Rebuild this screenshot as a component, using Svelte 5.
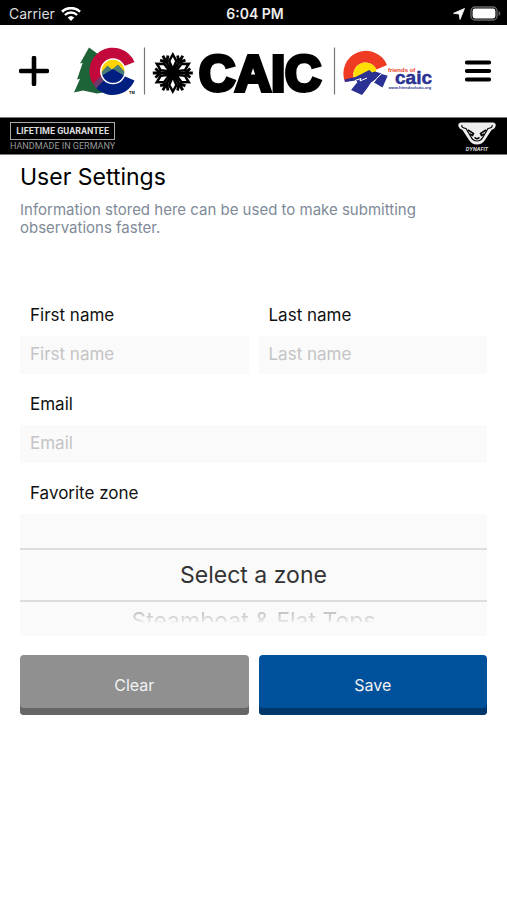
<script>
  const zones = ['Select a zone', 'Steamboat & Flat Tops', 'Front Range', 'Vail & Summit County'];
  let firstName = $state('');
  let lastName = $state('');
  let email = $state('');
  let zone = $state(zones[0]);
  let next = $derived(zones[zones.indexOf(zone) + 1] ?? '');
  let previous = $derived(zones[zones.indexOf(zone) - 1] ?? '');
  const arms = [0, 60, 120, 180, 240, 300];

  function clear() {
    firstName = '';
    lastName = '';
    email = '';
    zone = zones[0];
  }
</script>

<div class="status">
  <div class="carrier">
    <span>Carrier</span>
    <svg width="20" height="14" viewBox="0 0 20 14" fill="#fff" aria-hidden="true">
      <path d="M10 14 6.700 10.600a4.800 4.800 0 0 1 6.600 0z" />
      <path d="M3.900 8a8.800 8.800 0 0 1 12.200 0" fill="none" stroke="#fff" stroke-width="2.400" />
      <path d="M1 4.700a13 13 0 0 1 18 0" fill="none" stroke="#fff" stroke-width="2.600" />
    </svg>
  </div>
  <strong>6:04 PM</strong>
  <div class="power">
    <svg width="12" height="12" viewBox="0 0 12 12" fill="#fff" aria-hidden="true">
      <path d="M11.500.5 7 11.500 6.200 6 .5 5.300z" stroke="#fff" stroke-width=".8" stroke-linejoin="round" />
    </svg>
    <svg width="31" height="15" viewBox="0 0 31 15" aria-hidden="true">
      <rect x="1" y="1" width="26" height="13" rx="4" fill="none" stroke="#666" stroke-width="1.400" />
      <rect x="2.600" y="2.600" width="22.800" height="9.800" rx="2.400" fill="#fff" />
      <path d="M28.600 5v5q1.800-.8 1.800-2.500T28.600 5z" fill="#666" />
    </svg>
  </div>
</div>

<header>
  <button class="icon" aria-label="Add observation">
    <svg width="30" height="30" viewBox="0 0 30 30"><path d="M15 2v26M2 15h26" stroke="#000" stroke-width="4.600" stroke-linecap="round" /></svg>
  </button>
  <svg class="logo" width="362" height="50" viewBox="73 46 362 50" role="img" aria-label="CAIC and Friends of CAIC">
    <path d="M89 47.500 80 63.500l2.700-.8L77 79.500l3-.8-6 13.800 9-2 14 3 12-2V62z" fill="#1f6338" />
    <path d="M134.500 62A23.500 23.500 0 1 0 95.500 87L105 78A11 11 0 0 1 124.500 66z" fill="#c3093b" />
    <path d="M134.500 80.500A23.500 23.500 0 0 1 96 88L113 71l11 5z" fill="#001f80" />
    <path d="M93.500 83.500l8-8 4 3-9.500 10z" fill="#6b3a6a" />
    <circle cx="113" cy="71.300" r="12" fill="#ffd400" />
    <path d="M101.500 72l6-6.500 4.500 4 6-5 7 7.500-1 6h-21z" fill="#497b78" />
    <path d="M102 75.500l11-6.500 11.500 7A12 12 0 0 1 102 75.500z" fill="#001f80" />
    <circle cx="113" cy="71.300" r="12.200" fill="none" stroke="#fff" stroke-width="1.500" />
    <text x="129" y="94" font-size="4" font-weight="700">TM</text>
    <path d="M144.500 47.500v47M334.500 47.500v47" stroke="#777" stroke-width="1.200" />
    <g transform="translate(172.800 73)" stroke="#000">
      {#each arms as angle}
        <path d="M0 0H20M12 0l5.500-4.500M12 0l5.500 4.500" fill="none" stroke-width="2.800" transform="rotate({angle})" />
      {/each}
      {#each arms as angle}
        <path d="M3.500 0L12-3.600 18.500 0 12 3.600z" fill="#fff" stroke-width="2.500" transform="rotate({angle + 30})" />
      {/each}
    </g>
    <text class="caic" x="199" y="91">CAIC</text>
    <path d="M345 82A20.500 20.500 0 1 1 387 65l-10.500 4.500A12 12 0 0 0 354.500 80z" fill="#ef3b23" />
    <path d="M354.500 80A12 12 0 0 1 376.500 69.500L375 75l-6-3z" fill="#ffdf00" />
    <path d="M345 82l-.5-2.500 11-2.500 6-3 7.800-4 2.700 2.500 3-1 6.500 2-4.500 5-6 4-4 6-5 6.500-11-5 6.500-8-2-1.500z" fill="#2b3192" />
    <path d="M377 78.500l4.500-4.500 6.200 1.700-5.200 11.800-8.500-5z" fill="#2b3192" />
    <path d="M355 80.500l6-2-1 2.500 7-3M381.500 73.500l-5 5-3 4" fill="none" stroke="#fff" stroke-width="1" />
    <text class="friends" x="388" y="72">friends of</text>
    <text class="small-caic" x="395" y="83.500">caic</text>
    <text class="site" x="388.500" y="88.500">www.friendsofcaic.org</text>
  </svg>
  <button class="icon menu" aria-label="Menu">
    <svg width="26" height="22" viewBox="0 0 26 22"><path d="M2 2.500h22M2 11h22M2 19.500h22" stroke="#000" stroke-width="4.200" stroke-linecap="round" /></svg>
  </button>
</header>

<a class="banner" href="#sponsor">
  <span class="guarantee">
    <span class="boxed">LIFETIME GUARANTEE</span>
    <span class="made">HANDMADE IN GERMANY</span>
  </span>
  <svg width="40" height="32" viewBox="0 0 40 32" role="img" aria-label="Dynafit">
    <path d="M4 2.500h32q3.500.5 2.500 4-.5 2-4 3.500L28 20q-3 4.500-8 4.500T12 20L5.500 10q-3.500-1.500-4-3.500-1-3.500 2.500-4z" fill="#eee" />
    <path d="M5 5q-1 3 4 3.500l5 8.500q2 4 6 4t6-4l5-8.500q5-.5 4-3.500" fill="none" stroke="#000" stroke-width="1.200" />
    <path d="M11 10l5.500 3.500-1 2-3-1.500M29 10l-5.500 3.500 1 2 3-1.500M17.500 17.500l2.500 1.300 2.500-1.300" fill="none" stroke="#000" stroke-width="1.500" />
    <text x="20" y="31" text-anchor="middle" font-size="5" font-weight="700" font-style="italic" fill="#ddd">DYNAFIT</text>
  </svg>
</a>

<main>
  <h1>User Settings</h1>
  <p>Information stored here can be used to make submitting observations faster.</p>
  <form onsubmit={(e) => e.preventDefault()}>
    <div class="pair">
      <div class="field">
        <label for="first">First name</label>
        <input id="first" placeholder="First name" bind:value={firstName} />
      </div>
      <div class="field">
        <label for="last">Last name</label>
        <input id="last" placeholder="Last name" bind:value={lastName} />
      </div>
    </div>
    <div class="field">
      <label for="email">Email</label>
      <input id="email" type="email" placeholder="Email" bind:value={email} />
    </div>
    <div class="field">
      <label for="zone">Favorite zone</label>
      <div class="wheel">
        <div class="ghost" aria-hidden="true">{previous}</div>
        <select id="zone" bind:value={zone}>
          {#each zones as name}
            <option value={name}>{name}</option>
          {/each}
        </select>
        <div class="ghost" aria-hidden="true">{next}</div>
      </div>
    </div>
    <div class="pair actions">
      <button type="button" class="action" onclick={clear}>Clear</button>
      <button type="submit" class="action save">Save</button>
    </div>
  </form>
</main>

<style>
  :global(body) {
    background: #fff;
    color: #111;
    font-family: Inter, 'Liberation Sans', sans-serif;
  }
  .status {
    display: grid;
    grid-template-columns: 1fr auto 1fr;
    align-items: center;
    height: 25px;
    padding: 2px 6px 0 9px;
    box-sizing: border-box;
    background: #000;
    color: #eee;
    font-size: 14px;
  }
  .status strong {
    font-weight: 600;
  }
  .carrier,
  .power {
    display: flex;
    align-items: center;
    gap: 6px;
  }
  .carrier {
    color: #ddd;
  }
  .power {
    justify-content: flex-end;
    gap: 5px;
  }
  header {
    display: flex;
    align-items: center;
    height: 92px;
    padding: 0 16px 0 19px;
  }
  .icon {
    display: flex;
    padding: 0;
    border: 0;
    background: none;
  }
  .logo {
    margin-left: 24px;
    overflow: visible;
    font-family: 'Liberation Sans', Arial, sans-serif;
  }
  .menu {
    margin-left: auto;
  }
  .caic {
    font-size: 50px;
    font-weight: 700;
    stroke: #000;
    stroke-width: 4px;
  }
  .friends {
    font-size: 6px;
    font-weight: 700;
    fill: #ef3b23;
  }
  .small-caic {
    font-size: 19px;
    font-weight: 700;
    fill: #2b3192;
    stroke: #2b3192;
    stroke-width: 0.5px;
  }
  .site {
    font-size: 4px;
    font-weight: 700;
    fill: #2b3192;
  }
  .banner {
    display: flex;
    justify-content: space-between;
    align-items: center;
    height: 38px;
    padding: 0 10px;
    box-sizing: border-box;
    border: solid #777;
    border-width: 1px 0;
    background: #000;
    color: #ddd;
    text-decoration: none;
  }
  .guarantee {
    display: flex;
    flex-direction: column;
    align-items: center;
    gap: 1px;
    white-space: nowrap;
  }
  .boxed {
    padding: 0 5px;
    border: 1px solid #aaa;
    font: 700 9px/16px Roboto, sans-serif;
  }
  .made {
    color: #999;
    font: 9px/10px Roboto, sans-serif;
  }
  main {
    padding: 8px 20px 0;
  }
  h1 {
    margin: 0;
    color: #000;
    font-size: 23px;
    font-weight: 400;
    line-height: 28px;
  }
  p {
    margin: 10px 0 0;
    max-width: 420px;
    color: #808a98;
    font-size: 15px;
    line-height: 18px;
  }
  form {
    margin-top: 63px;
  }
  .pair {
    display: grid;
    grid-template-columns: 1fr 1fr;
    gap: 10px;
  }
  .field {
    padding-bottom: 15px;
  }
  label {
    display: block;
    padding: 3px 10px 9px;
    font-size: 17px;
    line-height: 24px;
  }
  input {
    display: block;
    width: 100%;
    height: 38px;
    padding: 0 10px 2px;
    box-sizing: border-box;
    border: 0;
    background: #fafafa;
    color: #111;
    font: inherit;
    font-size: 17px;
  }
  input::placeholder {
    color: #c4c4c6;
    opacity: 1;
  }
  .wheel {
    background: #fafafa;
    text-align: center;
    font-size: 23px;
  }
  select {
    display: block;
    width: 100%;
    height: 54px;
    padding: 0;
    border: solid #ddd;
    border-width: 2px 0;
    border-radius: 0;
    appearance: none;
    background: none;
    color: #333;
    font: inherit;
    text-align: center;
    text-align-last: center;
  }
  .ghost {
    height: 34px;
    overflow: hidden;
    line-height: 38px;
    color: transparent;
    background: linear-gradient(#c4c4c4 30%, #e2e2e2 56%, #fafafa 61%) text;
  }
  .actions {
    margin-top: 4px;
  }
  .action {
    height: 60px;
    padding: 0;
    border: 0;
    border-radius: 4px;
    background: #909090;
    box-shadow: inset 0 -7px #666;
    color: #f2f2f2;
    font: inherit;
    font-size: 16px;
  }
  .save {
    background: #00519b;
    box-shadow: inset 0 -7px #00376b;
  }
</style>
